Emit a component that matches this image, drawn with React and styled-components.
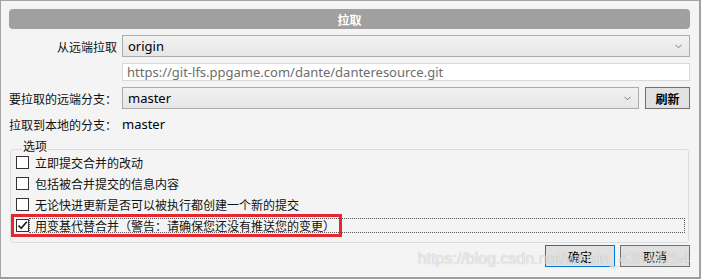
import React from "react";
import styled, { createGlobalStyle } from "styled-components";

const GlobalStyle = createGlobalStyle`
  body {
    margin: 0;
    background: #f4f4f4;
    font-family: "Noto Sans", "Noto Sans CJK SC", sans-serif;
  }
`;

const cjk = `"Noto Sans CJK SC", "Noto Sans", sans-serif`;
const latin = `"Noto Sans", "Noto Sans CJK SC", sans-serif`;

const Window = styled.div`
  position: relative;
  box-sizing: border-box;
  width: 701px;
  height: 279px;
  background: #f4f4f4;
  border-top: 1px solid #a3a3a3;
  border-left: 1px solid #a3a3a3;
  border-right: 2px solid #a0a0a0;
  border-bottom: 2px solid #9c9c9c;
  padding: 8px 9px 0 8px;
  display: flex;
  flex-direction: column;
`;

const TitleBar = styled.div`
  flex: none;
  height: 20px;
  border-radius: 4px;
  background: #a0a0a0;
  color: #fff;
  font: bold 12px ${cjk};
  display: flex;
  align-items: center;
  justify-content: center;
`;

const Form = styled.div`
  margin-top: 6px;
  display: flex;
  flex-direction: column;
  gap: 6px;
`;

const Row = styled.div`
  display: flex;
  align-items: center;
  height: ${(p) => p.h || 22}px;
  flex: none;
`;

const Label = styled.div`
  width: 113px;
  flex: none;
  box-sizing: border-box;
  padding-right: ${(p) => (p.right ? 5 : 0)}px;
  text-align: ${(p) => (p.right ? "right" : "left")};
  font: 12px ${cjk};
  color: #111;
  white-space: nowrap;
`;

const Select = styled.div`
  flex: 1;
  height: 22px;
  box-sizing: border-box;
  border: 1px solid #acacac;
  background: linear-gradient(#f2f2f2, #e6e6e6);
  display: flex;
  align-items: center;
  justify-content: space-between;
  padding: 0 7px 0 5px;
  font: 13px ${latin};
  color: #000;
`;

const UrlInput = styled.div`
  flex: 1;
  height: 18px;
  box-sizing: border-box;
  border: 1px solid #d9d9d9;
  background: #fff;
  display: flex;
  align-items: center;
  padding-left: 4px;
  font: 13px ${latin};
  color: #6d6d6d;
`;

const Value = styled.span`
  font: 13px ${latin};
  color: #000;
`;

const Button = styled.div`
  width: ${(p) => p.w || 70}px;
  height: 22px;
  flex: none;
  box-sizing: border-box;
  border: 1px solid ${(p) => (p.primary ? "#0078d7" : "#707070")};
  background: #e1e1e1;
  display: flex;
  align-items: center;
  justify-content: center;
  font: ${(p) => (p.bold ? "bold" : "normal")} 12px ${cjk};
  color: #000;
  margin-left: ${(p) => p.ml || 0}px;
`;

const Group = styled.div`
  flex: none;
  margin: 16px 1px 0 1px;
  border: 1px solid #d7dde2;
  border-radius: 3px;
  padding: 0 3px 9px 5px;
  display: flex;
  flex-direction: column;
`;

const Legend = styled.div`
  align-self: flex-start;
  height: 16px;
  margin: -12px 0 0 6px;
  padding: 0 1px;
  background: #f4f4f4;
  font: 12px/16px ${cjk};
  color: #111;
`;

const Options = styled.div`
  margin-top: 1px;
  display: flex;
  flex-direction: column;
  gap: 6px;
`;

const Option = styled.div`
  position: relative;
  display: flex;
  align-items: center;
  height: 15px;

  ${(p) =>
    p.marked &&
    `
    &::after {
      content: "";
      position: absolute;
      left: -5px;
      top: -4px;
      width: 331px;
      height: 23px;
      box-sizing: border-box;
      border: 3px solid #e8262f;
    }
  `}
`;

const Box = styled.div`
  width: 13px;
  height: 13px;
  box-sizing: border-box;
  border: 1px solid #333;
  background: #fff;
  flex: none;
  display: flex;
  align-items: center;
  justify-content: center;
`;

const OptionText = styled.div`
  flex: 1;
  height: 15px;
  box-sizing: border-box;
  border: 1px dotted ${(p) => (p.focused ? "#555" : "transparent")};
  padding-left: 5px;
  display: flex;
  align-items: center;
  font: 12px ${cjk};
  color: #111;
  white-space: nowrap;
`;

const Footer = styled.div`
  flex: none;
  margin-top: 2px;
  display: flex;
  justify-content: flex-end;
`;

const Watermark = styled.div`
  position: absolute;
  right: 9px;
  top: 249px;
  font: 16px "Liberation Sans", Arial, sans-serif;
  color: rgba(255, 255, 255, 0.7);
  text-shadow: 0 0 1px rgba(0, 0, 0, 0.3);
  pointer-events: none;
`;

const Chevron = () => (
  <svg width="7" height="5" viewBox="0 0 7 5">
    <path d="M0.5 0.8 L3.5 3.8 L6.5 0.8" fill="none" stroke="#7a7a7a" strokeWidth="1" />
  </svg>
);

const Check = () => (
  <svg width="11" height="11" viewBox="0 0 11 11">
    <path d="M1.5 5.5 L4.2 8.3 L9.8 1.8" fill="none" stroke="#1a1a1a" strokeWidth="1.7" />
  </svg>
);

const options = [
  { text: "立即提交合并的改动" },
  { text: "包括被合并提交的信息内容" },
  { text: "无论快进更新是否可以被执行都创建一个新的提交" },
  { text: "用变基代替合并（警告：请确保您还没有推送您的变更）", checked: true },
];

export default function App() {
  return (
    <>
      <GlobalStyle />
      <Window>
        <TitleBar>拉取</TitleBar>
        <Form>
          <Row>
            <Label right>从远端拉取</Label>
            <Select>
              origin
              <Chevron />
            </Select>
          </Row>
          <Row h={18}>
            <Label />
            <UrlInput>https://git-lfs.ppgame.com/dante/danteresource.git</UrlInput>
          </Row>
          <Row>
            <Label>要拉取的远端分支：</Label>
            <Select>
              master
              <Chevron />
            </Select>
            <Button w={45} ml={6} bold>
              刷新
            </Button>
          </Row>
          <Row h={18}>
            <Label>拉取到本地的分支：</Label>
            <Value>master</Value>
          </Row>
        </Form>
        <Group>
          <Legend>选项</Legend>
          <Options>
            {options.map((o) => (
              <Option key={o.text} marked={o.checked}>
                <Box>{o.checked && <Check />}</Box>
                <OptionText focused={o.checked}>{o.text}</OptionText>
              </Option>
            ))}
          </Options>
        </Group>
        <Footer>
          <Button primary>确定</Button>
          <Button ml={5}>取消</Button>
        </Footer>
        <Watermark>https://blog.csdn.net/weixin_43844254</Watermark>
      </Window>
    </>
  );
}
